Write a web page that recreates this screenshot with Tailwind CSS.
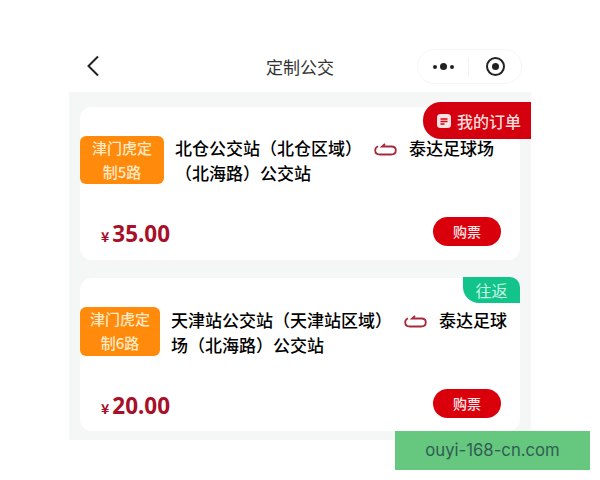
<!DOCTYPE html>
<html lang="zh-CN">
<head>
  <meta charset="UTF-8">
  <title>定制公交</title>
  <script src="https://cdn.jsdelivr.net/npm/@tailwindcss/browser@4"></script>
</head>
<body class="bg-white w-[600px] h-[480px] overflow-hidden relative font-['Noto_Sans_CJK_SC','Noto_Sans',sans-serif]">
  <header class="h-[92px] ml-[69px] w-[462px] relative">
    <svg class="absolute left-[16px] top-[55px]" width="16" height="22" viewBox="0 0 16 22" fill="none" stroke="#222" stroke-width="2"><path d="M13 1.500 L3.500 11 L13 20.500"/></svg>
    <h1 class="absolute left-0 right-0 top-[54px] text-center text-[17px] leading-[26px] text-[#333]">定制公交</h1>
    <div class="absolute left-[348px] top-[49px] w-[105px] h-[35px] rounded-full border border-[#f6f6f6] flex items-center">
      <div class="w-[50px] flex items-center justify-center gap-[3px]">
        <span class="w-[4px] h-[4px] rounded-full bg-[#222]"></span>
        <span class="w-[7px] h-[7px] rounded-full bg-[#222]"></span>
        <span class="w-[4px] h-[4px] rounded-full bg-[#222]"></span>
      </div>
      <div class="w-px h-[20px] bg-[#f3f3f3]"></div>
      <div class="flex-1 flex justify-center">
        <div class="w-[19px] h-[19px] rounded-full border-[2.500px] border-[#222] flex items-center justify-center"><span class="w-[7px] h-[7px] rounded-full bg-[#222]"></span></div>
      </div>
    </div>
  </header>

  <main class="ml-[69px] w-[462px] h-[348px] bg-[#f5f7f7] pt-[15px] px-[11px] flex flex-col gap-[18px] relative">
    <section class="h-[153px] bg-white rounded-[12px] pt-[29px] pb-[14px] flex flex-col justify-between">
      <div class="flex gap-[11px]">
        <div class="w-[84px] h-[48px] shrink-0 rounded-[6px] bg-[#ff8a0c] text-[#ffe9c4] text-[15px] font-medium leading-[24px] text-center">津门虎定<br>制5路</div>
        <p class="-mt-px text-[17px] leading-[25px] font-medium text-black pr-[10px]"><span>北仓公交站（北仓区域）</span><svg class="inline-block mx-[12px] align-[-1px]" width="23" height="13" viewBox="0 0 23 13" fill="none" stroke="#a8283c" stroke-width="1.800"><path d="M4 3.200 Q1.200 4.500 1.200 7.200 Q1.200 11.500 6 11.500 L17 11.500 Q21.800 11.500 21.800 7.200 Q21.800 3.500 17.500 3.500 L8 3.500 L11 0.800"/></svg><span>泰达足球场</span><span>（北海路）公交站</span></p>
      </div>
      <div class="flex items-center justify-between pl-[21px] pr-[19px]">
        <div class="translate-y-[2px] text-[#a80f28] font-bold flex items-baseline"><span class="text-[14px] mr-[3px]">¥</span><span class="text-[22.500px] leading-[29px] font-['Noto_Sans']">35.00</span></div>
        <button class="w-[68px] h-[29px] rounded-full bg-[#d9000c] text-[#ffe8e8] text-[14px] font-medium">购票</button>
      </div>
    </section>

    <section class="h-[153px] bg-white rounded-[12px] pt-[29px] pb-[13px] flex flex-col justify-between relative">
      <div class="absolute right-0 top-[-1px] w-[57px] h-[26px] bg-[#12c48a] rounded-tr-[10px] rounded-bl-[16px] text-[#c8f5e4] text-[16px] leading-[26px] text-center">往返</div>
      <div class="flex gap-[11px]">
        <div class="w-[80px] h-[49px] shrink-0 rounded-[6px] bg-[#ff8a0c] text-[#ffe9c4] text-[15px] font-medium leading-[24px] text-center">津门虎定<br>制6路</div>
        <p class="text-[17px] leading-[25px] font-medium text-black pr-[10px]"><span>天津站公交站（天津站区域）</span><svg class="inline-block mx-[12px] align-[-1px]" width="23" height="13" viewBox="0 0 23 13" fill="none" stroke="#a8283c" stroke-width="1.800"><path d="M4 3.200 Q1.200 4.500 1.200 7.200 Q1.200 11.500 6 11.500 L17 11.500 Q21.800 11.500 21.800 7.200 Q21.800 3.500 17.500 3.500 L8 3.500 L11 0.800"/></svg><span>泰达足球</span><span>场（北海路）公交站</span></p>
      </div>
      <div class="flex items-center justify-between pl-[21px] pr-[19px]">
        <div class="translate-y-[2px] text-[#a80f28] font-bold flex items-baseline"><span class="text-[14px] mr-[3px]">¥</span><span class="text-[22.500px] leading-[29px] font-['Noto_Sans']">20.00</span></div>
        <button class="w-[68px] h-[29px] rounded-full bg-[#d9000c] text-[#ffe8e8] text-[14px] font-medium">购票</button>
      </div>
    </section>

    <div class="absolute right-0 top-[10px] w-[108px] h-[37px] bg-[#d5000f] rounded-l-[18px] flex items-center pl-[14px] gap-[6px] text-[#fbdcdc] text-[16px] font-medium">
      <svg width="14" height="14" viewBox="0 0 14 14"><rect width="14" height="14" rx="3.500" fill="#fbe3e3"/><path d="M3.500 5h7M3.500 7.500h7M3.500 10h4" stroke="#d5000f" stroke-width="1.300"/></svg>
      <span>我的订单</span>
    </div>
  </main>

  <div class="absolute left-[395px] top-[431px] w-[195px] h-[39px] bg-[#66c77e] text-[#2f5d52] text-[16.700px] leading-[39px] text-center font-['Inter']">ouyi-168-cn.com</div>
</body>
</html>
